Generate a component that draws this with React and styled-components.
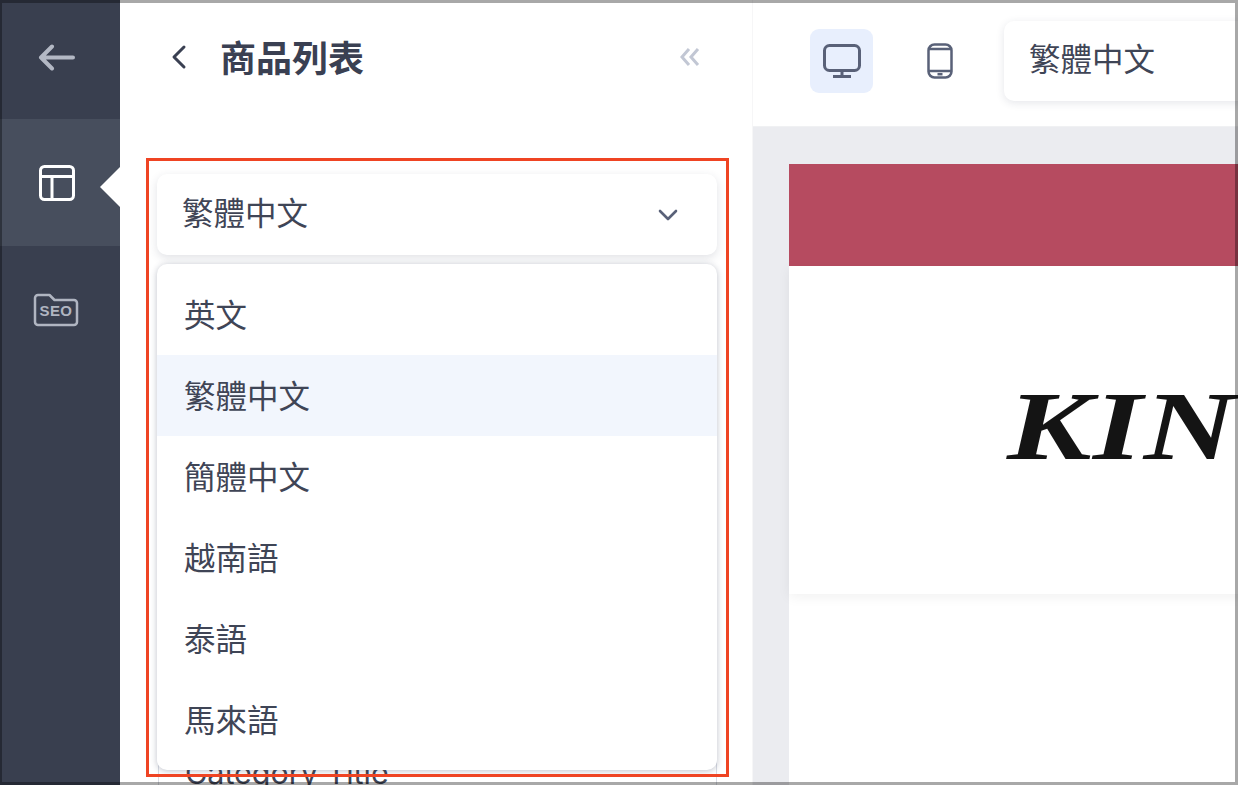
import React from "react";
import styled, { createGlobalStyle } from "styled-components";

const Global = createGlobalStyle`
  html, body { margin: 0; padding: 0; background: #fff; }
  * { box-sizing: border-box; }
  body { font-family: "Noto Sans CJK TC", "Noto Sans", sans-serif; color: #3f4556; }
`;

const Page = styled.div`
  position: relative;
  width: 1238px;
  height: 785px;
  overflow: hidden;
  display: flex;
  background: #fff;
`;

const FrameEdge = styled.div`
  position: absolute;
  inset: 0;
  border: 3px solid rgba(0, 0, 0, 0.34);
  border-left-width: 2px;
  pointer-events: none;
  z-index: 5;
`;

const Sidebar = styled.nav`
  width: 120px;
  flex: none;
  background: #393f4f;
  display: flex;
  flex-direction: column;
`;

const NavItem = styled.div`
  position: relative;
  height: ${(p) => p.$h}px;
  display: flex;
  align-items: ${(p) => p.$align || "center"};
  justify-content: center;
  padding-top: ${(p) => p.$top || 0}px;
  padding-right: ${(p) => p.$right || 0}px;
  background: ${(p) => (p.$active ? "#474e5d" : "transparent")};
`;

const Notch = styled.span`
  position: absolute;
  right: 0;
  top: 48px;
  width: 0;
  height: 0;
  border-top: 20px solid transparent;
  border-bottom: 20px solid transparent;
  border-right: 20px solid #fff;
`;

const SeoIcon = styled.div`
  position: relative;
  width: 46px;
  height: 34px;
`;

const SeoLabel = styled.span`
  position: absolute;
  left: 0;
  right: 0;
  top: 8px;
  text-align: center;
  font-family: "Liberation Sans", sans-serif;
  font-weight: 700;
  font-size: 15px;
  line-height: 20px;
  letter-spacing: 0.4px;
  color: #b0b5c1;
`;

const Panel = styled.aside`
  width: 633px;
  flex: none;
  display: flex;
  flex-direction: column;
  background: #fff;
  border-right: 1px solid #f6f6f7;
`;

const PanelHeader = styled.header`
  height: 114px;
  flex: none;
  display: flex;
  align-items: center;
  padding: 0 51px 0 50px;
`;

const Title = styled.h1`
  margin: 0 0 2px 32px;
  flex: 1;
  font-size: 36px;
  line-height: 48px;
  font-weight: 700;
  color: #3a4052;
`;

const PanelBody = styled.div`
  flex: 1;
  padding: 60px 35px 0 37px;
`;

const SelectWrap = styled.div`
  position: relative;
`;

const Trigger = styled.div`
  height: 81px;
  border-radius: 10px;
  background: #fff;
  box-shadow: 0 3px 10px rgba(40, 50, 80, 0.14);
  display: flex;
  align-items: center;
  justify-content: space-between;
  padding: 0 38px 8px 25px;
  font-size: 31.5px;
  line-height: 44px;
`;

const Chevron = styled.svg`
  margin-top: 8px;
`;

const Menu = styled.ul`
  position: absolute;
  top: 90px;
  left: 0;
  right: 0;
  margin: 0;
  padding: 10px 0;
  list-style: none;
  background: #fff;
  border-radius: 10px;
  box-shadow: 0 1px 6px rgba(40, 50, 80, 0.3);
  z-index: 3;
`;

const Option = styled.li`
  height: 81px;
  display: flex;
  align-items: center;
  padding: 0 0 4px 27px;
  font-size: 31.5px;
  line-height: 44px;
  background: ${(p) => (p.$selected ? "#f2f6fd" : "transparent")};
`;

const Field = styled.div`
  margin: 476px 0 0 1px;
  height: 90px;
  border: 1px solid #d9dce4;
  border-radius: 6px;
  padding: 21px 26px;
  font-family: "Inter", sans-serif;
  font-size: 30.5px;
  line-height: 40px;
  color: #3f4556;
`;

const Preview = styled.main`
  flex: 1;
  min-width: 0;
  display: flex;
  flex-direction: column;
`;

const Toolbar = styled.div`
  height: 127px;
  flex: none;
  display: flex;
  align-items: flex-start;
  padding: 21px 0 0 57px;
  background: #fff;
  border-bottom: 1px solid #f0f1f3;
`;

const DeviceButton = styled.button`
  width: 63px;
  height: 64px;
  flex: none;
  margin: 8px ${(p) => p.$gap}px 0 0;
  padding: 0;
  border: 0;
  border-radius: 9px;
  display: flex;
  align-items: center;
  justify-content: center;
  background: ${(p) => (p.$active ? "#e8effd" : "transparent")};
`;

const LangSelect = styled.div`
  width: 320px;
  height: 80px;
  flex: none;
  display: flex;
  align-items: center;
  padding: 0 0 8px 25px;
  border-radius: 10px;
  background: #fff;
  box-shadow: 0 2px 8px rgba(40, 50, 80, 0.12);
  font-size: 31.5px;
  line-height: 44px;
`;

const Canvas = styled.div`
  flex: 1;
  min-height: 0;
  padding: 37px 0 0 36px;
  background: #ebecf0;
  overflow: hidden;
`;

const Sheet = styled.div`
  width: 900px;
  height: 100%;
  background: #fff;
  display: flex;
  flex-direction: column;
`;

const Banner = styled.div`
  height: 102px;
  flex: none;
  background: #b64b60;
`;

const Hero = styled.div`
  height: 328px;
  flex: none;
  display: flex;
  align-items: center;
  padding: 0 0 7px 218px;
  box-shadow: 0 3px 12px rgba(0, 0, 0, 0.06);
`;

const Logo = styled.span`
  display: inline-block;
  font-family: "Liberation Serif", serif;
  font-weight: 700;
  font-style: italic;
  font-size: 97px;
  line-height: 1;
  letter-spacing: 1px;
  color: #141414;
  white-space: nowrap;
  transform: scaleX(1.31);
  transform-origin: left center;
`;

const Annotation = styled.div`
  position: absolute;
  left: 146px;
  top: 158px;
  width: 583px;
  height: 619px;
  border: 3px solid #ef4423;
  pointer-events: none;
  z-index: 4;
`;

const languages = ["英文", "繁體中文", "簡體中文", "越南語", "泰語", "馬來語"];

export default function App() {
  return (
    <Page>
      <Global />
      <Sidebar>
        <NavItem $h={119} $align="flex-start" $top={44} $right={6}>
          <svg width="38" height="28" viewBox="0 0 38 28" fill="none" stroke="#b3b8c4" strokeWidth="4" strokeLinecap="round" strokeLinejoin="round">
            <path d="M35 13.5H3M14 2.5 3 13.5l11 11" />
          </svg>
        </NavItem>
        <NavItem $active $h={127} $right={6}>
          <svg width="36" height="36" viewBox="0 0 36 36" fill="none" stroke="#fff" strokeWidth="3" strokeLinejoin="round">
            <rect x="1.5" y="1.5" width="33" height="33" rx="4" />
            <path d="M1.5 11.5h33M13 11.5v23" />
          </svg>
          <Notch />
        </NavItem>
        <NavItem $h={110} $align="flex-start" $top={47} $right={8}>
          <SeoIcon>
            <svg width="46" height="34" viewBox="0 0 46 34" fill="none" stroke="#b0b5c1" strokeWidth="2.5" strokeLinejoin="round">
              <path d="M2 5a3 3 0 0 1 3-3h11.5l5 5H41a3 3 0 0 1 3 3v19a3 3 0 0 1-3 3H5a3 3 0 0 1-3-3Z" />
            </svg>
            <SeoLabel>SEO</SeoLabel>
          </SeoIcon>
        </NavItem>
      </Sidebar>

      <Panel>
        <PanelHeader>
          <svg width="18" height="26" viewBox="0 0 18 26" fill="none" stroke="#3a4052" strokeWidth="3" strokeLinecap="round" strokeLinejoin="round">
            <path d="M14 3 4 13l10 10" />
          </svg>
          <Title>商品列表</Title>
          <svg width="22" height="20" viewBox="0 0 22 20" fill="none" stroke="#c2c7d4" strokeWidth="3">
            <path d="M10 2 3 10l7 8M19 2l-7 8 7 8" />
          </svg>
        </PanelHeader>
        <PanelBody>
          <SelectWrap>
            <Trigger>
              繁體中文
              <Chevron width="22" height="14" viewBox="0 0 22 14" fill="none" stroke="#596178" strokeWidth="2.6" strokeLinecap="round" strokeLinejoin="round">
                <path d="m3 3 8 8 8-8" />
              </Chevron>
            </Trigger>
            <Menu>
              {languages.map((name) => (
                <Option key={name} $selected={name === "繁體中文"}>
                  {name}
                </Option>
              ))}
            </Menu>
          </SelectWrap>
          <Field>Category Title</Field>
        </PanelBody>
      </Panel>

      <Preview>
        <Toolbar>
          <DeviceButton $active $gap={35}>
            <svg width="38" height="34" viewBox="0 0 38 34" fill="none" stroke="#596178" strokeWidth="3" strokeLinejoin="round">
              <rect x="1.5" y="1.5" width="35" height="25" rx="5" />
              <path d="M19 27v5M10 32.5h18" />
            </svg>
          </DeviceButton>
          <DeviceButton $gap={33}>
            <svg width="26" height="36" viewBox="0 0 26 36" fill="none" stroke="#596178" strokeWidth="2.5" strokeLinejoin="round">
              <rect x="1.5" y="1.5" width="23" height="33" rx="6" />
              <path d="M2 6h22M2 28h22" />
              <path d="M10.5 31.2h5" />
            </svg>
          </DeviceButton>
          <LangSelect>繁體中文</LangSelect>
        </Toolbar>
        <Canvas>
          <Sheet>
            <Banner />
            <Hero>
              <Logo>KING</Logo>
            </Hero>
          </Sheet>
        </Canvas>
      </Preview>

      <Annotation />
      <FrameEdge />
    </Page>
  );
}
